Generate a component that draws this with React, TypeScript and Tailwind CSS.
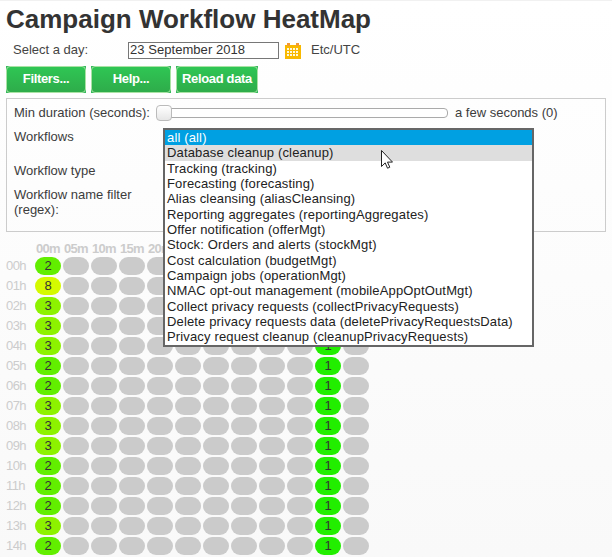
const workflows = [
  'all (all)',
  'Database cleanup (cleanup)',
  'Tracking (tracking)',
  'Forecasting (forecasting)',
  'Alias cleansing (aliasCleansing)',
  'Reporting aggregates (reportingAggregates)',
  'Offer notification (offerMgt)',
  'Stock: Orders and alerts (stockMgt)',
  'Cost calculation (budgetMgt)',
  'Campaign jobs (operationMgt)',
  'NMAC opt-out management (mobileAppOptOutMgt)',
  'Collect privacy requests (collectPrivacyRequests)',
  'Delete privacy requests data (deletePrivacyRequestsData)',
  'Privacy request cleanup (cleanupPrivacyRequests)',
];

const minutes = ['00m', '05m', '10m', '15m', '20m', '25m', '30m', '35m', '40m', '45m', '50m', '55m'];
const firstColumn = [2, 8, 3, 3, 3, 2, 2, 3, 3, 3, 2, 2, 2, 3, 2];

const heat: Record<number, string> = {
  0: 'bg-[#cbcbcb]',
  1: 'bg-[#22ee00]',
  2: 'bg-[#62ee00]',
  3: 'bg-[#8df200]',
  8: 'bg-[#d4fa00]',
};

function CalendarIcon() {
  return (
    <svg width="16" height="16" viewBox="0 0 16 16" shapeRendering="crispEdges">
      <path d="M0 2h16v14H0z" fill="#f8b900" />
      <path d="M2 0h3v3H2zM11 0h3v3h-3z" fill="#f39a35" />
      <path
        d="M2 5h2v2H2zM5 5h2v2H5zM8 5h2v2H8zM11 5h2v2h-2zM2 8h2v2H2zM5 8h2v2H5zM8 8h2v2H8zM11 8h2v2h-2zM2 11h2v2H2zM5 11h2v2H5zM8 11h2v2H8zM11 11h2v2h-2z"
        fill="#fff8dc"
      />
    </svg>
  );
}

function GreenButton({ label, width }: { label: string; width: string }) {
  return (
    <div className={`${width} h-[27px] bg-[#35b85b]`}>
      <button className="block h-full w-full rounded-[4px] border border-[#a9e2a4] bg-linear-to-b from-[#2fc654] to-[#2eac4a] pb-[2px] text-center text-[13px] leading-[22px] font-bold tracking-[-0.35px] whitespace-nowrap text-white">
        {label}
      </button>
    </div>
  );
}

function WorkflowList() {
  return (
    <div className="absolute top-[127px] left-[163px] h-[219px] w-[371px] border-2 border-[#666] bg-white text-[13px] tracking-[0.15px] text-[#222]">
      {workflows.map((name, i) => (
        <div
          key={name}
          className={`h-[15.35px] pl-[2px] whitespace-nowrap ${
            i === 0
              ? 'bg-[#00a0e2] leading-[16px] text-white'
              : i === 1
                ? 'bg-[#dedede] leading-[15px]'
                : 'leading-[15px]'
          }`}
        >
          {name}
        </div>
      ))}
    </div>
  );
}

function Pointer() {
  return (
    <svg className="absolute top-[149px] left-[381px]" width="12" height="19" viewBox="0 0 12 19">
      <path d="M.5.5v16l3.7-3.6 2.3 5.3 2.3-1-2.3-5.1h5z" fill="#fff" stroke="#222" />
    </svg>
  );
}

export default function App() {
  return (
    <div className="relative h-[557px] w-[612px] overflow-hidden border-t border-[#f1f1f1] bg-linear-to-b from-white to-[#f9f9f9] font-['Liberation_Sans',Arial,sans-serif] text-[13px] text-[#444]">
      <h1 className="mt-[2px] ml-[6px] h-[32px] text-[26px] leading-[33px] font-bold whitespace-nowrap text-[#333]">
        Campaign Workflow HeatMap
      </h1>
      <div className="mt-[6px] ml-[13px] flex h-[18px] items-center">
        <span className="w-[115px]">Select a day:</span>
        <span className="flex h-[17px] w-[151px] items-center border border-[#777] bg-white pl-px tracking-[0.05px] text-[#333]">
          23 September 2018
        </span>
        <span className="mt-px mr-[10px] ml-[6px] h-[16px]">
          <CalendarIcon />
        </span>
        <span>Etc/UTC</span>
      </div>
      <div className="mt-[7px] ml-[6px] flex gap-[5px]">
        <GreenButton label="Filters..." width="w-[80px]" />
        <GreenButton label="Help..." width="w-[80px]" />
        <GreenButton label="Reload data" width="w-[82px]" />
      </div>
      <div className="mt-[5px] ml-[6px] h-[134px] w-[600px] border border-[#ccc] pl-[7px] text-[#3c3c3c]">
        <div className="mt-[5px] flex h-[18px] items-center">
          <span className="w-[143px] whitespace-nowrap">Min duration (seconds):</span>
          <span className="flex h-[10px] w-[291px] items-center rounded-[4px] border border-[#aaa] bg-white">
            <span className="-ml-[2px] h-[16px] w-[16px] shrink-0 rounded-[4px] border border-[#bbb] bg-linear-to-b from-white to-[#e6e6e6]" />
          </span>
          <span className="ml-[7px]">a few seconds (0)</span>
        </div>
        <div className="mt-[7px] h-[15px] leading-[15px]">Workflows</div>
        <div className="mt-[19px] h-[15px] leading-[15px]">Workflow type</div>
        <div className="mt-[9px] w-[130px] leading-[15px]">Workflow name filter (regex):</div>
      </div>
      <div className="mt-[8px] ml-[6px] flex flex-col gap-[2px]">
        <div className="flex h-[15px] gap-[2px] pl-[29px] leading-[18px] font-bold tracking-[-0.7px] text-[#ccc]">
          {minutes.map((m) => (
            <span key={m} className="w-[26px] text-center">
              {m}
            </span>
          ))}
        </div>
        {firstColumn.map((count, hour) => (
          <div key={hour} className="flex h-[18px] gap-[2px] leading-[18px]">
            <span className="w-[27px] tracking-[-0.6px] text-[#ccc]">{String(hour).padStart(2, '0')}h</span>
            {minutes.map((m, col) => {
              const value = col === 0 ? count : col === 10 ? 1 : 0;
              return (
                <span key={m} className={`h-[18px] w-[26px] rounded-[9px] text-center text-[#333] ${heat[value]}`}>
                  {value || ''}
                </span>
              );
            })}
          </div>
        ))}
      </div>
      <WorkflowList />
      <Pointer />
    </div>
  );
}
